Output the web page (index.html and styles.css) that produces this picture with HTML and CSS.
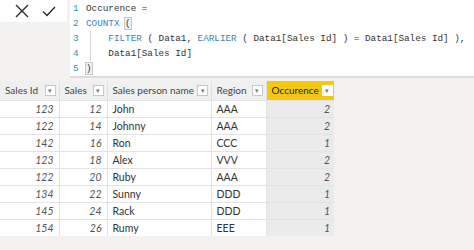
FILE: index.html
```html
<!DOCTYPE html>
<html lang="en">
<head>
    <meta charset="UTF-8">
    <title>Occurence</title>
    <link rel="stylesheet" href="styles.css">
</head>
<body>
    <div class="formula-bar">
        <div class="actions">
            <svg class="icon" width="14" height="14" viewBox="0 0 14 14">
                <path d="M1 1 L13 13 M13 1 L1 13" stroke="#252423" stroke-width="1.3" fill="none"/>
            </svg>
            <svg class="icon" width="14" height="14" viewBox="0 0 14 14">
                <path d="M1 7.5 L5 11.5 L13 3" stroke="#252423" stroke-width="1.3" fill="none"/>
            </svg>
        </div>
        <div class="editor">
            <div class="line"><span class="num">1</span><span class="code">Occurence =</span></div>
            <div class="line"><span class="num">2</span><span class="code"><span class="kw">COUNTX</span> <span class="match">(</span></span></div>
            <div class="line"><span class="num">3</span><span class="code"><span class="guide"></span>    <span class="kw">FILTER</span> ( Data1, <span class="kw">EARLIER</span> ( Data1[Sales Id] ) = Data1[Sales Id] ),</span></div>
            <div class="line"><span class="num">4</span><span class="code"><span class="guide"></span>    Data1[Sales Id]</span></div>
            <div class="line"><span class="num">5</span><span class="code"><span class="match">)</span></span></div>
        </div>
    </div>

    <table class="grid">
        <colgroup>
            <col class="c-id">
            <col class="c-sales">
            <col class="c-name">
            <col class="c-region">
            <col class="c-occ">
        </colgroup>
        <thead>
            <tr>
                <th><div class="head"><span>Sales Id</span><span class="drop">▾</span></div></th>
                <th><div class="head"><span>Sales</span><span class="drop">▾</span></div></th>
                <th><div class="head"><span>Sales person name</span><span class="drop">▾</span></div></th>
                <th><div class="head"><span>Region</span><span class="drop">▾</span></div></th>
                <th class="active"><div class="head"><span>Occurence</span><span class="drop">▾</span></div></th>
            </tr>
        </thead>
        <tbody>
            <tr><td class="n">123</td><td class="n">12</td><td>John</td><td>AAA</td><td class="n calc">2</td></tr>
            <tr><td class="n">122</td><td class="n">14</td><td>Johnny</td><td>AAA</td><td class="n calc">2</td></tr>
            <tr><td class="n">142</td><td class="n">16</td><td>Ron</td><td>CCC</td><td class="n calc">1</td></tr>
            <tr><td class="n">123</td><td class="n">18</td><td>Alex</td><td>VVV</td><td class="n calc">2</td></tr>
            <tr><td class="n">122</td><td class="n">20</td><td>Ruby</td><td>AAA</td><td class="n calc">2</td></tr>
            <tr><td class="n">134</td><td class="n">22</td><td>Sunny</td><td>DDD</td><td class="n calc">1</td></tr>
            <tr><td class="n">145</td><td class="n">24</td><td>Rack</td><td>DDD</td><td class="n calc">1</td></tr>
            <tr><td class="n">154</td><td class="n">26</td><td>Rumy</td><td>EEE</td><td class="n calc">1</td></tr>
        </tbody>
    </table>
</body>
</html>
```

FILE: styles.css
```css
* {
    margin: 0;
    padding: 0;
    box-sizing: border-box;
}

body {
    font-family: 'Lato', 'Noto Sans', sans-serif;
    background: #f3f2f1;
    color: #252423;
    font-size: 10.5px;
}

.formula-bar {
    display: flex;
    gap: 3px;
    height: 78px;
}

.actions {
    width: 67px;
    height: 22px;
    background: white;
    display: flex;
    align-items: center;
    gap: 13px;
    padding-left: 15px;
}

.icon {
    display: block;
}

.editor {
    flex: 1;
    background: white;
    border-bottom: 2px solid #dcdcdc;
    padding-top: 1px;
    padding-left: 3px;
    font-family: 'Liberation Mono', monospace;
    font-size: 9.3px;
}

.line {
    display: flex;
    height: 15px;
    line-height: 15px;
    white-space: pre;
}

.num {
    width: 13px;
    color: #2b91af;
}

.code {
    position: relative;
    color: #333;
}

.kw {
    color: #3b7fc4;
}

.match {
    outline: 1px solid #c8c8c8;
    background: #f2f2f2;
}

.guide {
    position: absolute;
    left: 4px;
    top: 0;
    bottom: 0;
    border-left: 1px solid #d8d8d8;
}

.grid {
    width: 334px;
    margin-top: 3px;
    border-collapse: collapse;
    background: white;
    table-layout: fixed;
}

.grid th {
    height: 19px;
    background: #f0f0f0;
    font-weight: normal;
    font-size: 10px;
    text-align: left;
    color: #444;
    padding: 0 3px 0 5px;
    border-right: 1px solid #e0e0e0;
    white-space: nowrap;
    overflow: hidden;
}

.head {
    display: flex;
    align-items: center;
    justify-content: space-between;
    gap: 3px;
}

.drop {
    flex: none;
    width: 11px;
    height: 11px;
    background: white;
    border: 1px solid #c8c8c8;
    font-size: 7px;
    line-height: 9px;
    text-align: center;
    color: #777;
}

.grid th.active {
    background: #f2c811;
    color: #252423;
    border-right: none;
}

.grid th.active .drop {
    border-color: white;
}

.c-id { width: 59px; }
.c-sales { width: 48px; }
.c-name { width: 104px; }
.c-region { width: 55px; }
.c-occ { width: 68px; }

.grid td {
    height: 17px;
    padding: 0 5px;
    border-top: 1px solid #e3e3e3;
    border-right: 1px solid #e3e3e3;
    color: #333;
    white-space: nowrap;
    overflow: hidden;
}

.grid td.n {
    text-align: right;
    font-style: italic;
    color: #555;
}

.grid td.calc {
    background: #ebebeb;
    border-right: none;
    padding-right: 4px;
}
```
